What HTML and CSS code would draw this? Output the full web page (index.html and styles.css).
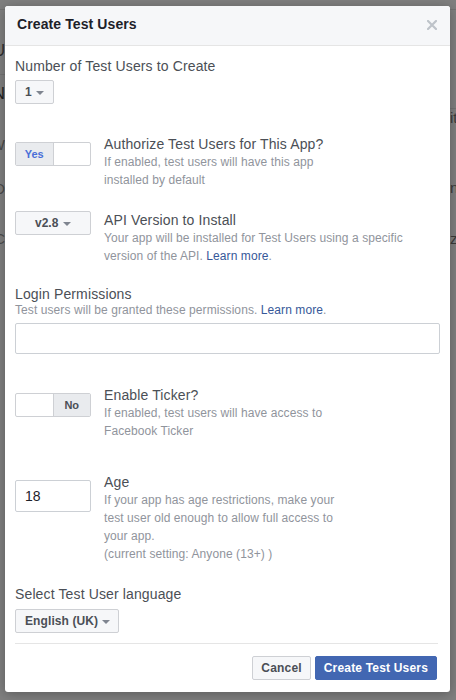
FILE: index.html
```html
<!DOCTYPE html>
<html lang="en">
<head>
<meta charset="utf-8">
<title>Create Test Users</title>
<link rel="stylesheet" href="styles.css">
</head>
<body>
<div class="backdrop">
  <div class="strip strip-left">
    <div class="bg-line bg-line-top"></div>
    <div class="bg-word bg-u"><span>U</span></div>
    <div class="bg-line bg-line-mid"></div>
    <div class="bg-word bg-n"><span>N</span></div>
    <div class="bg-word bg-w"><span>W</span></div>
    <div class="bg-word bg-d"><span>D</span></div>
    <div class="bg-word bg-c"><span>C</span></div>
  </div>
  <div class="strip strip-right">
    <div class="bg-line bg-line-top"></div>
    <div class="bg-line bg-line-r"></div>
    <div class="bg-word bg-it"><span>it</span></div>
    <div class="bg-word bg-ny"><span>ny</span></div>
    <div class="bg-word bg-z"><span>z_</span></div>
  </div>
</div>

<div class="modal">
  <div class="modal-header">
    <h2 class="modal-title">Create Test Users</h2>
    <span class="close" aria-label="Close">
      <svg width="10" height="10" viewBox="0 0 10 10"><path d="M1 1 L9 9 M9 1 L1 9" stroke="#bec3c9" stroke-width="2.2" stroke-linecap="square" fill="none"/></svg>
    </span>
  </div>

  <div class="modal-body">
    <div class="label">Number of Test Users to Create</div>
    <div class="select select-count">1<span class="caret"></span></div>

    <div class="row row-auth">
      <div class="control control-pad">
        <div class="toggle">
          <span class="seg seg-on seg-yes">Yes</span>
          <span class="seg"></span>
        </div>
      </div>
      <div class="info">
        <div class="label">Authorize Test Users for This App?</div>
        <div class="desc desc-narrow">If enabled, test users will have this app installed by default</div>
      </div>
    </div>

    <div class="row row-api">
      <div class="control">
        <div class="select select-version">v2.8<span class="caret"></span></div>
      </div>
      <div class="info">
        <div class="label">API Version to Install</div>
        <div class="desc">Your app will be installed for Test Users using a specific version of the API. <a class="link" href="#">Learn more</a>.</div>
      </div>
    </div>

    <div class="login">
      <div class="label">Login Permissions</div>
      <div class="desc desc-login">Test users will be granted these permissions. <a class="link" href="#">Learn more</a>.</div>
      <div class="text-input text-input-wide"></div>
    </div>

    <div class="row row-ticker">
      <div class="control control-pad">
        <div class="toggle">
          <span class="seg"></span>
          <span class="seg seg-on seg-no">No</span>
        </div>
      </div>
      <div class="info">
        <div class="label">Enable Ticker?</div>
        <div class="desc desc-narrow">If enabled, test users will have access to Facebook Ticker</div>
      </div>
    </div>

    <div class="row row-age">
      <div class="control control-pad">
        <div class="text-input text-input-age">18</div>
      </div>
      <div class="info">
        <div class="label">Age</div>
        <div class="desc desc-narrow">If your app has age restrictions, make your test user old enough to allow full access to your app.</div>
        <div class="desc">(current setting: Anyone (13+) )</div>
      </div>
    </div>

    <div class="lang">
      <div class="label">Select Test User language</div>
      <div class="select select-lang">English (UK)<span class="caret"></span></div>
    </div>
  </div>

  <div class="modal-footer">
    <button class="btn btn-cancel" type="button">Cancel</button>
    <button class="btn btn-primary" type="button">Create Test Users</button>
  </div>
</div>
</body>
</html>
```

FILE: styles.css
```css
* { box-sizing: border-box; }

html, body {
  margin: 0;
  padding: 0;
}

body {
  position: relative;
  width: 456px;
  height: 700px;
  overflow: hidden;
  background: #7f7f7f;
  font-family: "Liberation Sans", Arial, Helvetica, sans-serif;
}

/* dimmed page behind the dialog */
.backdrop {
  display: flex;
  justify-content: space-between;
  height: 700px;
}

.strip {
  display: flex;
  flex-direction: column;
  overflow: hidden;
}

.strip-left { width: 5px; }
.strip-right { width: 6px; }

.bg-line {
  height: 1px;
  background: #737373;
  flex-shrink: 0;
}

.bg-line-top { margin-top: 9px; }
.bg-line-mid { margin-top: 0; }
.bg-line-r { margin-top: 98px; }

.bg-word {
  display: flex;
  height: 18px;
  line-height: 18px;
  font-size: 15px;
  color: #2e2e2e;
  white-space: nowrap;
  flex-shrink: 0;
}

.strip-left .bg-word { justify-content: flex-end; }
.strip-right .bg-word { justify-content: flex-start; }

.bg-u { order: 0; margin-top: 32px; font-size: 16px; }
.strip-left .bg-line-mid { order: 1; margin-top: 14px; }
.bg-n { order: 2; margin-top: 10px; font-size: 17px; color: #1f1f1f; }
.bg-w { order: 3; margin-top: 33px; color: #4a4a4a; }
.bg-d { order: 4; margin-top: 26px; color: #4a4a4a; }
.bg-c { order: 5; margin-top: 32px; color: #4a4a4a; }

.bg-it { margin-top: 0; color: #3a3a3a; }
.bg-ny { margin-top: 52px; color: #3a3a3a; }
.bg-z { margin-top: 33px; color: #3a3a3a; }

/* dialog */
.modal {
  position: absolute;
  left: 5px;
  top: 6px;
  width: 445px;
  height: 686px;
  background: #fff;
  border-radius: 3px;
  box-shadow: 0 2px 12px rgba(0, 0, 0, 0.28);
  overflow: hidden;
  display: flex;
  flex-direction: column;
}

.modal-header {
  display: flex;
  align-items: center;
  background: #f6f7f9;
  border-bottom: 1px solid #e5e5e5;
  padding: 9px 13px 11px 12px;
}

.modal-title {
  margin: 0;
  font-size: 14px;
  line-height: 19px;
  font-weight: bold;
  color: #1d2129;
  letter-spacing: 0.1px;
}

.close {
  margin-left: auto;
  display: flex;
  width: 10px;
  height: 10px;
}

.modal-body {
  padding: 11px 10px 10px 10px;
}

.label {
  font-size: 14px;
  line-height: 18px;
  color: #4b4f56;
  letter-spacing: 0.13px;
}

.desc {
  font-size: 12px;
  line-height: 18px;
  color: #90949c;
  letter-spacing: 0.08px;
}

.desc-narrow { max-width: 242px; }

.link {
  color: #365899;
  text-decoration: none;
}

/* select-like buttons */
.select {
  display: inline-flex;
  align-items: center;
  gap: 4px;
  height: 24px;
  padding: 0 9px;
  border: 1px solid #ced0d4;
  border-radius: 2px;
  background: #f6f7f9;
  font-size: 12px;
  font-weight: bold;
  color: #4b4f56;
  white-space: nowrap;
}

.select-count { margin-top: 5px; padding: 0 9px 0 9px; }

.select-version {
  gap: 5px;
  padding: 0 19px 0 19px;
}

.select-lang {
  margin-top: 6px;
  padding: 0 8px 0 9px;
  letter-spacing: 0.1px;
}

.caret {
  width: 0;
  height: 0;
  border-left: 4px solid transparent;
  border-right: 4px solid transparent;
  border-top: 4px solid #7f8590;
  margin-top: 1px;
}

/* rows with a control on the left and text on the right */
.row {
  display: grid;
  grid-template-columns: 89px 1fr;
}

.control-pad { padding-top: 7px; }

.row-auth { margin-top: 31px; }
.row-api { margin-top: 22px; }
.login { margin-top: 20px; }
.row-ticker { margin-top: 32px; }
.row-age { margin-top: 33px; }
.lang { margin-top: 22px; }

.desc-login { margin-top: -2px; }

.toggle {
  display: flex;
  width: 76px;
  height: 24px;
  border: 1px solid #ced0d4;
  border-radius: 2px;
  overflow: hidden;
  background: #fff;
}

.seg {
  flex: 1;
  display: flex;
  align-items: center;
  justify-content: center;
  font-size: 11px;
  font-weight: bold;
}

.seg-on { background: #e9ebee; }

.seg-yes {
  color: #4a6fd8;
  border-right: 1px solid #ced0d4;
}

.seg-no {
  color: #4b4f56;
  border-left: 1px solid #ced0d4;
}

.text-input {
  border: 1px solid #ccd0d5;
  border-radius: 2px;
  background: #fff;
}

.text-input-wide {
  margin-top: 4px;
  width: 100%;
  height: 31px;
}

.text-input-age {
  width: 76px;
  height: 32px;
  padding-left: 9px;
  font-size: 14px;
  line-height: 30px;
  color: #1d2129;
}

/* footer */
.modal-footer {
  display: flex;
  justify-content: flex-end;
  gap: 4px;
  margin: 0 12px 0 10px;
  padding: 12px 1px 12px 0;
  border-top: 1px solid #e5e5e5;
}

.btn {
  height: 24px;
  padding: 0 8px;
  border-radius: 2px;
  font-family: "Liberation Sans", Arial, Helvetica, sans-serif;
  font-size: 12px;
  font-weight: bold;
  line-height: 22px;
  letter-spacing: 0.18px;
  cursor: pointer;
}

.btn-cancel {
  border: 1px solid #ced0d4;
  background: #f6f7f9;
  color: #4b4f56;
}

.btn-primary {
  border: 1px solid #4267b2;
  background: #4267b2;
  color: #fff;
}
```
